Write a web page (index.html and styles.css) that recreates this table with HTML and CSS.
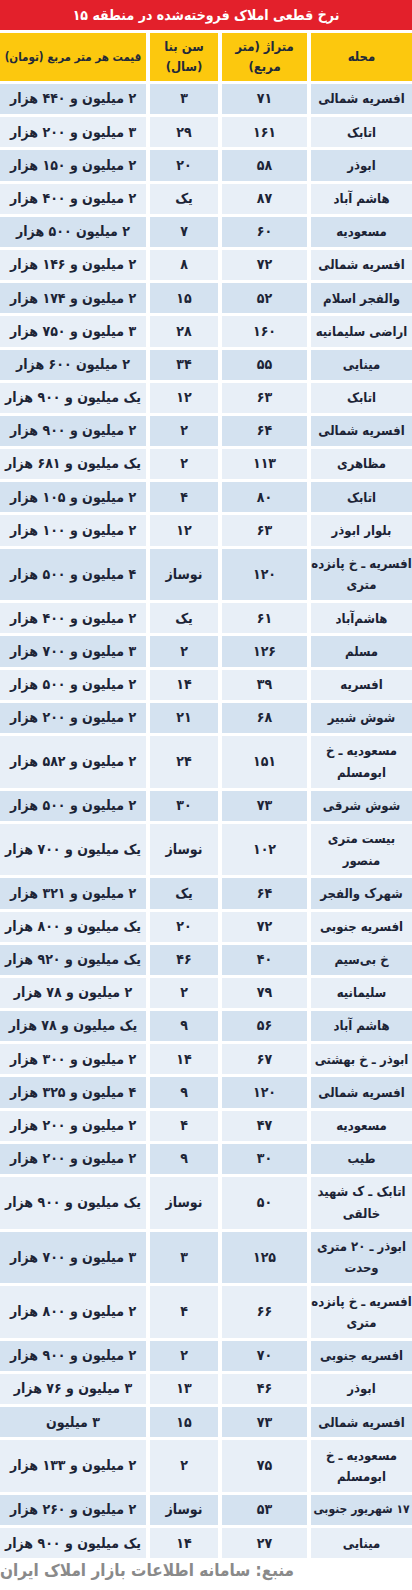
FILE: index.html
```html
<!DOCTYPE html>
<html lang="fa" dir="rtl">
<head>
<meta charset="utf-8">
<title>نرخ قطعی املاک فروخته‌شده در منطقه ۱۵</title>
<link rel="stylesheet" href="styles.css">
</head>
<body>
<div class="page">
  <div class="title">نرخ قطعی املاک فروخته‌شده در منطقه ۱۵</div>
  <div class="table">
    <div class="row head"><div class="c">محله</div><div class="c">متراژ (متر<br>مربع)</div><div class="c">سن بنا<br>(سال)</div><div class="c tight">قیمت هر متر مربع (تومان)</div></div>
    <div class="row"><div class="c">افسریه شمالی</div><div class="c">۷۱</div><div class="c">۳</div><div class="c">۲ میلیون و ۴۴۰ هزار</div></div>
    <div class="row"><div class="c">اتابک</div><div class="c">۱۶۱</div><div class="c">۲۹</div><div class="c">۳ میلیون و ۲۰۰ هزار</div></div>
    <div class="row"><div class="c">ابوذر</div><div class="c">۵۸</div><div class="c">۲۰</div><div class="c">۲ میلیون و ۱۵۰ هزار</div></div>
    <div class="row"><div class="c">هاشم آباد</div><div class="c">۸۷</div><div class="c">یک</div><div class="c">۲ میلیون و ۴۰۰ هزار</div></div>
    <div class="row"><div class="c">مسعودیه</div><div class="c">۶۰</div><div class="c">۷</div><div class="c">۲ میلیون ۵۰۰ هزار</div></div>
    <div class="row"><div class="c">افسریه شمالی</div><div class="c">۷۲</div><div class="c">۸</div><div class="c">۲ میلیون و ۱۴۶ هزار</div></div>
    <div class="row"><div class="c">والفجر اسلام</div><div class="c">۵۲</div><div class="c">۱۵</div><div class="c">۲ میلیون و ۱۷۴ هزار</div></div>
    <div class="row"><div class="c">اراضی سلیمانیه</div><div class="c">۱۶۰</div><div class="c">۲۸</div><div class="c">۳ میلیون و ۷۵۰ هزار</div></div>
    <div class="row"><div class="c">مینایی</div><div class="c">۵۵</div><div class="c">۳۴</div><div class="c">۲ میلیون ۶۰۰ هزار</div></div>
    <div class="row"><div class="c">اتابک</div><div class="c">۶۳</div><div class="c">۱۲</div><div class="c">یک میلیون و ۹۰۰ هزار</div></div>
    <div class="row"><div class="c">افسریه شمالی</div><div class="c">۶۴</div><div class="c">۲</div><div class="c">۲ میلیون و ۹۰۰ هزار</div></div>
    <div class="row"><div class="c">مظاهری</div><div class="c">۱۱۳</div><div class="c">۲</div><div class="c">یک میلیون و ۶۸۱ هزار</div></div>
    <div class="row"><div class="c">اتابک</div><div class="c">۸۰</div><div class="c">۴</div><div class="c">۲ میلیون و ۱۰۵ هزار</div></div>
    <div class="row"><div class="c">بلوار ابوذر</div><div class="c">۶۳</div><div class="c">۱۲</div><div class="c">۲ میلیون و ۱۰۰ هزار</div></div>
    <div class="row"><div class="c">افسریه ـ خ پانزده<br>متری</div><div class="c">۱۲۰</div><div class="c">نوساز</div><div class="c">۴ میلیون و ۵۰۰ هزار</div></div>
    <div class="row"><div class="c">هاشم‌آباد</div><div class="c">۶۱</div><div class="c">یک</div><div class="c">۲ میلیون و ۴۰۰ هزار</div></div>
    <div class="row"><div class="c">مسلم</div><div class="c">۱۲۶</div><div class="c">۲</div><div class="c">۳ میلیون و ۷۰۰ هزار</div></div>
    <div class="row"><div class="c">افسریه</div><div class="c">۳۹</div><div class="c">۱۴</div><div class="c">۲ میلیون و ۵۰۰ هزار</div></div>
    <div class="row"><div class="c">شوش شبیر</div><div class="c">۶۸</div><div class="c">۲۱</div><div class="c">۲ میلیون و ۲۰۰ هزار</div></div>
    <div class="row"><div class="c">مسعودیه ـ خ<br>ابومسلم</div><div class="c">۱۵۱</div><div class="c">۲۴</div><div class="c">۲ میلیون و ۵۸۲ هزار</div></div>
    <div class="row"><div class="c">شوش شرقی</div><div class="c">۷۳</div><div class="c">۳۰</div><div class="c">۲ میلیون و ۵۰۰ هزار</div></div>
    <div class="row"><div class="c">بیست متری<br>منصور</div><div class="c">۱۰۲</div><div class="c">نوساز</div><div class="c">یک میلیون و ۷۰۰ هزار</div></div>
    <div class="row"><div class="c">شهرک والفجر</div><div class="c">۶۴</div><div class="c">یک</div><div class="c">۲ میلیون و ۳۲۱ هزار</div></div>
    <div class="row"><div class="c">افسریه جنوبی</div><div class="c">۷۲</div><div class="c">۲۰</div><div class="c">یک میلیون و ۸۰۰ هزار</div></div>
    <div class="row"><div class="c">خ بی‌سیم</div><div class="c">۴۰</div><div class="c">۴۶</div><div class="c">یک میلیون و ۹۲۰ هزار</div></div>
    <div class="row"><div class="c">سلیمانیه</div><div class="c">۷۹</div><div class="c">۲</div><div class="c">۲ میلیون و ۷۸ هزار</div></div>
    <div class="row"><div class="c">هاشم آباد</div><div class="c">۵۶</div><div class="c">۹</div><div class="c">یک میلیون و ۷۸ هزار</div></div>
    <div class="row"><div class="c">ابوذر ـ خ بهشتی</div><div class="c">۶۷</div><div class="c">۱۴</div><div class="c">۲ میلیون و ۳۰۰ هزار</div></div>
    <div class="row"><div class="c">افسریه شمالی</div><div class="c">۱۲۰</div><div class="c">۹</div><div class="c">۴ میلیون و ۳۲۵ هزار</div></div>
    <div class="row"><div class="c">مسعودیه</div><div class="c">۴۷</div><div class="c">۴</div><div class="c">۲ میلیون و ۲۰۰ هزار</div></div>
    <div class="row"><div class="c">طیب</div><div class="c">۳۰</div><div class="c">۹</div><div class="c">۲ میلیون و ۲۰۰ هزار</div></div>
    <div class="row"><div class="c">اتابک ـ ک شهید<br>خالقی</div><div class="c">۵۰</div><div class="c">نوساز</div><div class="c">یک میلیون و ۹۰۰ هزار</div></div>
    <div class="row"><div class="c">ابوذر ـ ۲۰ متری<br>وحدت</div><div class="c">۱۲۵</div><div class="c">۳</div><div class="c">۳ میلیون و ۷۰۰ هزار</div></div>
    <div class="row"><div class="c">افسریه ـ خ پانزده<br>متری</div><div class="c">۶۶</div><div class="c">۴</div><div class="c">۲ میلیون و ۸۰۰ هزار</div></div>
    <div class="row"><div class="c">افسریه جنوبی</div><div class="c">۷۰</div><div class="c">۲</div><div class="c">۲ میلیون و ۹۰۰ هزار</div></div>
    <div class="row"><div class="c">ابوذر</div><div class="c">۴۶</div><div class="c">۱۳</div><div class="c">۳ میلیون و ۷۶ هزار</div></div>
    <div class="row"><div class="c">افسریه شمالی</div><div class="c">۷۳</div><div class="c">۱۵</div><div class="c">۳ میلیون</div></div>
    <div class="row"><div class="c">مسعودیه ـ خ<br>ابومسلم</div><div class="c">۷۵</div><div class="c">۲</div><div class="c">۲ میلیون و ۱۳۳ هزار</div></div>
    <div class="row"><div class="c tight">۱۷ شهریور جنوبی</div><div class="c">۵۳</div><div class="c">نوساز</div><div class="c">۲ میلیون و ۲۶۰ هزار</div></div>
    <div class="row"><div class="c">مینایی</div><div class="c">۲۷</div><div class="c">۱۴</div><div class="c">یک میلیون و ۹۰۰ هزار</div></div>
  </div>
  <div class="source">منبع: سامانه اطلاعات بازار املاک ایران</div>
</div>
</body>
</html>
```

FILE: styles.css
```css
* { box-sizing: border-box; }
html, body { margin: 0; padding: 0; background: #ffffff; }
.page {
  width: 412px;
  font-family: "DejaVu Sans Condensed", "DejaVu Sans", sans-serif;
  font-weight: bold;
  color: #1c2436;
  overflow: hidden;
}
.title {
  height: 30px;
  background: #e3202b;
  color: #ffffff;
  font-size: 14px;
  line-height: 30px;
  text-align: center;
  margin-bottom: 3px;
}
.table {
  display: flex;
  flex-direction: column;
  gap: 3px;
}
.row {
  display: grid;
  grid-template-columns: 101px 85px 68px 1fr;
  column-gap: 4px;
}
.c {
  display: flex;
  align-items: center;
  justify-content: center;
  text-align: center;
  font-size: 14px;
  line-height: 21.4px;
  padding: 4.4px 1px;
  min-height: 30.2px;
  white-space: nowrap;
}
.c:first-child { font-size: 13px; }
.c.tight { font-size: 12px; }
.row:nth-child(even) .c { background: #d4e2f0; }
.row:nth-child(odd) .c { background: #e8eff7; }
.row.head .c {
  background: #fcc80e;
  height: 48px;
  line-height: 20px;
  font-size: 13px;
  color: #232a3a;
}
.row.head .c.tight { font-size: 11.5px; }
.source {
  margin-top: 1px;
  font-size: 17px;
  line-height: 22px;
  color: #8a8a8a;
  text-align: left;
  white-space: nowrap;
}
```
